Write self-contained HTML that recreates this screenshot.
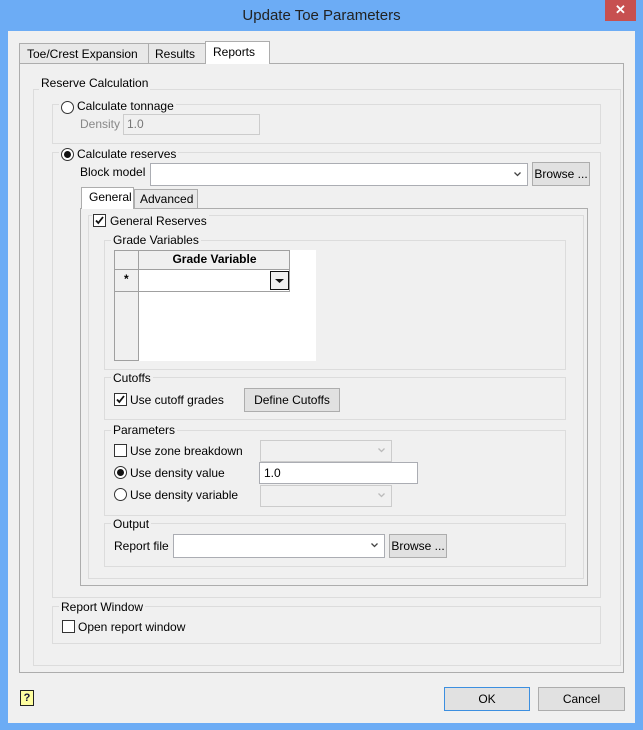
<!DOCTYPE html>
<html><head><meta charset="utf-8"><style>
*{box-sizing:border-box}
body{margin:0;width:643px;height:730px;background:#6cacf5;font-family:"Liberation Sans",sans-serif;font-size:12px;color:#000;position:relative;overflow:hidden}
.a{position:absolute}
.client{left:8px;top:31px;width:627px;height:692px;background:#f0f0f0}
.g{position:absolute;border:1px solid #dcdcdc}
.lbl{position:absolute;background:#f0f0f0;padding:0 2px;white-space:nowrap;line-height:14px}
.t{position:absolute;white-space:nowrap;line-height:14px}
.cb{position:absolute;width:13px;height:13px;border:1px solid #333;background:#fff}
.rb{position:absolute;width:13px;height:13px;border:1px solid #333;border-radius:50%;background:#fff}
.rb.on::after{content:"";position:absolute;left:2px;top:2px;width:7px;height:7px;border-radius:50%;background:#111}
.field{position:absolute;background:#fff;border:1px solid #abadb3}
.btn{position:absolute;background:#e1e1e1;border:1px solid #adadad;text-align:center;line-height:20px}
.chev{position:absolute;right:6px;top:50%;margin-top:-3px;width:7px;height:5px}
</style></head><body>
<div class="a" style="left:0;top:0;width:643px;height:31px;text-align:center;line-height:32px;font-size:15px;color:#222">Update Toe Parameters</div>
<div class="a" style="left:605px;top:0;width:31px;height:21px;background:#c75050;color:#fff;text-align:center;line-height:20px;font-size:13px;font-weight:bold">✕</div>
<div class="a client"></div>

<!-- tabs -->
<div class="a" style="left:19px;top:63px;width:605px;height:610px;border:1px solid #adadad;background:#fff"></div>
<div class="a" style="left:20px;top:64px;width:603px;height:608px;background:#f0f0f0;"></div>
<div class="a" style="left:19px;top:43px;width:130px;height:21px;border:1px solid #adadad;background:#e8e8e8;padding-left:7px;line-height:20px">Toe/Crest Expansion</div>
<div class="a" style="left:148px;top:43px;width:58px;height:21px;border:1px solid #adadad;background:#e8e8e8;padding-left:6px;line-height:20px">Results</div>
<div class="a" style="left:205px;top:41px;width:65px;height:23px;border:1px solid #adadad;border-bottom:none;background:#fff;padding-left:7px;line-height:20px">Reports</div>

<div class="g" style="left:33px;top:89px;width:588px;height:577px"></div>
<div class="lbl" style="left:39px;top:76px">Reserve Calculation</div>

<div class="g" style="left:52px;top:104px;width:549px;height:40px"></div>
<div class="lbl" style="left:59px;top:99px;padding-left:2px"><span style="display:inline-block;width:16px"></span>Calculate tonnage</div>
<div class="rb" style="left:61px;top:101px"></div>
<div class="t" style="left:80px;top:117px;color:#888">Density</div>
<div class="a" style="left:123px;top:114px;width:137px;height:21px;border:1px solid #ccc;background:#f0f0f0;color:#777;padding-left:3px;line-height:19px">1.0</div>

<div class="g" style="left:52px;top:152px;width:549px;height:446px"></div>
<div class="lbl" style="left:59px;top:147px"><span style="display:inline-block;width:16px"></span>Calculate reserves</div>
<div class="rb on" style="left:61px;top:148px"></div>
<div class="t" style="left:80px;top:165px">Block model</div>
<div class="field" style="left:150px;top:163px;width:378px;height:23px"><svg class="chev" viewBox="0 0 7 5"><path d="M0.5 0.5L3.5 3.5L6.5 0.5" fill="none" stroke="#444" stroke-width="1.3"/></svg></div>
<div class="btn" style="left:532px;top:162px;width:58px;height:24px;line-height:22px">Browse ...</div>

<!-- inner tabs -->
<div class="a" style="left:80px;top:208px;width:508px;height:378px;border:1px solid #adadad;background:#fff"></div>
<div class="a" style="left:81px;top:209px;width:506px;height:376px;background:#f0f0f0"></div>
<div class="a" style="left:134px;top:189px;width:64px;height:20px;border:1px solid #adadad;background:#e8e8e8;padding-left:5px;line-height:19px">Advanced</div>
<div class="a" style="left:81px;top:187px;width:53px;height:22px;border:1px solid #adadad;border-bottom:none;background:#fff;padding-left:7px;line-height:19px">General</div>

<div class="g" style="left:88px;top:215px;width:496px;height:364px"></div>
<div class="lbl" style="left:92px;top:214px"><span style="display:inline-block;width:16px"></span>General Reserves</div>
<div class="cb" style="left:93px;top:214px"><svg width="11" height="11" viewBox="0 0 11 11" style="position:absolute;left:0;top:0"><path d="M2 5.5L4.3 8L9 2" fill="none" stroke="#111" stroke-width="1.8"/></svg></div>

<div class="g" style="left:104px;top:240px;width:462px;height:130px"></div>
<div class="lbl" style="left:111px;top:233px">Grade Variables</div>
<div class="a" style="left:114px;top:250px;width:202px;height:111px;background:#fff"></div>
<div class="a" style="left:114px;top:250px;width:25px;height:111px;background:#f0f0f0;border:1px solid #a0a0a0;border-top:none"></div>
<div class="a" style="left:114px;top:250px;width:176px;height:20px;background:#f0f0f0;border:1px solid #a0a0a0"></div>
<div class="a" style="left:138px;top:250px;width:1px;height:42px;background:#a0a0a0"></div>
<div class="a" style="left:139px;top:250px;width:151px;height:20px;text-align:center;font-weight:bold;line-height:19px">Grade Variable</div>
<div class="a" style="left:114px;top:291px;width:176px;height:1px;background:#a0a0a0"></div>
<div class="a" style="left:289px;top:270px;width:1px;height:22px;background:#a0a0a0"></div>
<div class="t" style="left:124px;top:272px;font-weight:bold">*</div>
<div class="a" style="left:270px;top:271px;width:19px;height:19px;border:1px solid #111;background:#f0f0f0"><svg width="17" height="17" viewBox="0 0 17 17" style="position:absolute;left:0;top:0"><path d="M4 7L13 7L8.5 11Z" fill="#111"/></svg></div>

<div class="g" style="left:104px;top:377px;width:462px;height:43px"></div>
<div class="lbl" style="left:111px;top:371px">Cutoffs</div>
<div class="cb" style="left:114px;top:393px"><svg width="11" height="11" viewBox="0 0 11 11" style="position:absolute;left:0;top:0"><path d="M2 5.5L4.3 8L9 2" fill="none" stroke="#111" stroke-width="1.8"/></svg></div>
<div class="t" style="left:130px;top:393px">Use cutoff grades</div>
<div class="btn" style="left:244px;top:388px;width:96px;height:24px;line-height:22px">Define Cutoffs</div>

<div class="g" style="left:104px;top:430px;width:462px;height:86px"></div>
<div class="lbl" style="left:111px;top:423px">Parameters</div>
<div class="cb" style="left:114px;top:444px"></div>
<div class="t" style="left:130px;top:444px">Use zone breakdown</div>
<div class="a" style="left:260px;top:440px;width:132px;height:22px;border:1px solid #ccc;background:#f0f0f0"><svg class="chev" viewBox="0 0 7 5"><path d="M0.5 0.5L3.5 3.5L6.5 0.5" fill="none" stroke="#bbb" stroke-width="1.3"/></svg></div>
<div class="rb on" style="left:114px;top:466px"></div>
<div class="t" style="left:130px;top:466px">Use density value</div>
<div class="field" style="left:259px;top:462px;width:159px;height:22px;padding-left:4px;line-height:20px">1.0</div>
<div class="rb" style="left:114px;top:488px"></div>
<div class="t" style="left:130px;top:488px">Use density variable</div>
<div class="a" style="left:260px;top:485px;width:132px;height:22px;border:1px solid #ccc;background:#f0f0f0"><svg class="chev" viewBox="0 0 7 5"><path d="M0.5 0.5L3.5 3.5L6.5 0.5" fill="none" stroke="#bbb" stroke-width="1.3"/></svg></div>

<div class="g" style="left:104px;top:523px;width:462px;height:44px"></div>
<div class="lbl" style="left:111px;top:517px">Output</div>
<div class="t" style="left:114px;top:539px">Report file</div>
<div class="field" style="left:173px;top:534px;width:212px;height:24px"><svg class="chev" viewBox="0 0 7 5"><path d="M0.5 0.5L3.5 3.5L6.5 0.5" fill="none" stroke="#444" stroke-width="1.3"/></svg></div>
<div class="btn" style="left:389px;top:534px;width:58px;height:24px;line-height:22px">Browse ...</div>

<div class="g" style="left:52px;top:606px;width:549px;height:38px"></div>
<div class="lbl" style="left:59px;top:600px">Report Window</div>
<div class="cb" style="left:62px;top:620px"></div>
<div class="t" style="left:78px;top:620px">Open report window</div>

<div class="a" style="left:20px;top:690px;width:14px;height:16px;border:1px solid #222;background:#ffffa0;font-size:11px;font-weight:bold;text-align:center;line-height:14px;color:#113">?</div>
<div class="btn" style="left:444px;top:687px;width:86px;height:24px;border-color:#3c8fe0;line-height:22px">OK</div>
<div class="btn" style="left:538px;top:687px;width:87px;height:24px;line-height:22px">Cancel</div>
</body></html>
